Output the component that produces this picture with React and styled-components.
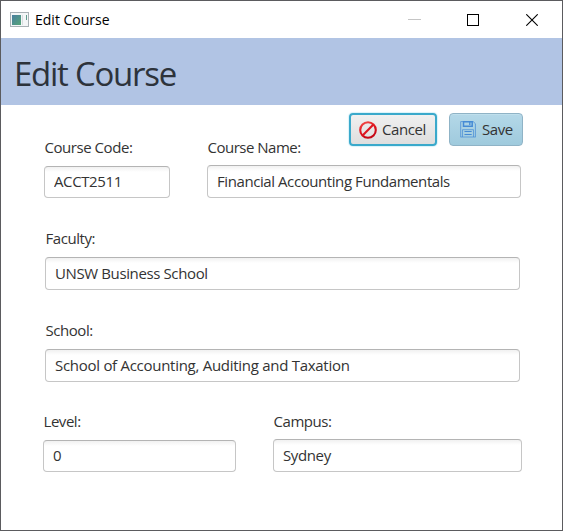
import React from "react";
import styled, { createGlobalStyle } from "styled-components";

const GlobalStyle = createGlobalStyle`
  * { box-sizing: border-box; }
  body { margin: 0; background: #fff; }
`;

const Window = styled.main`
  width: 563px;
  height: 531px;
  display: flex;
  flex-direction: column;
  border: 1px solid #5b5b5e;
  background: #fff;
  color: #333;
  font: 15px/20px "Open Sans", "Noto Sans", sans-serif;
  overflow: hidden;
`;

const TitleBar = styled.header`
  flex: 0 0 37px;
  display: flex;
  align-items: center;
  padding-left: 9px;
  color: #000;
`;

const WindowTitle = styled.span`
  flex: 1;
  margin-left: 5px;
  font-size: 14px;
`;

const WindowControls = styled.div`
  display: flex;
  align-items: center;
  padding-right: 1px;
`;

const Control = styled.span`
  width: ${(p) => p.$width || 59}px;
  display: flex;
  justify-content: center;
`;

const Banner = styled.div`
  flex: 0 0 67px;
  display: flex;
  align-items: center;
  padding: 4px 0 0 13px;
  background: #b1c4e4;
`;

const Heading = styled.h1`
  margin: 0;
  font-size: 33px;
  line-height: 44px;
  font-weight: 400;
  letter-spacing: -1.25px;
  color: #2d333b;
`;

const Actions = styled.div`
  display: flex;
  justify-content: flex-end;
  gap: 12px;
  padding: 8px 39px 0 0;
`;

const ActionButton = styled.button`
  width: ${(p) => p.$width}px;
  height: 33px;
  display: flex;
  align-items: center;
  gap: ${(p) => p.$gap}px;
  padding: 0 0 0 ${(p) => p.$pad}px;
  border-radius: 4px;
  border: ${(p) => (p.$primary ? "1px solid #8fb3c6" : "2px solid #3aa9cb")};
  background: ${(p) =>
    p.$primary
      ? "linear-gradient(#b4d8e8, #9fcadd)"
      : "linear-gradient(#f0f0f0, #dedede)"};
  box-shadow: ${(p) =>
    p.$primary ? "inset 0 1px #bfdfec" : "0 0 1px 1px #d9f3fa"};
  color: #333;
  font: inherit;
  letter-spacing: ${(p) => p.$track}px;
`;

const ButtonText = styled.span`
  padding-bottom: 2px;
`;

const Form = styled.form`
  display: flex;
  flex-direction: column;
`;

const Row = styled.div`
  display: flex;
  align-items: flex-end;
  gap: ${(p) => p.$gap || 0}px;
  margin: ${(p) => p.$top}px 0 0 ${(p) => p.$left}px;
`;

const Field = styled.label`
  width: ${(p) => p.$width}px;
  display: flex;
  flex-direction: column;
  gap: ${(p) => p.$space}px;
`;

const Caption = styled.span`
  height: 20px;
  padding-left: 0.5px;
  line-height: 18px;
  letter-spacing: ${(p) => p.$track}px;
`;

const TextInput = styled.input`
  width: 100%;
  height: ${(p) => p.$height}px;
  padding: 0 8px 2px 9px;
  border: 1px solid #c6c6c6;
  border-top-color: #b4b4b4;
  border-radius: 4px;
  background: linear-gradient(#f1f1f1, #fff 5px);
  outline: none;
  color: #333;
  font: inherit;
  letter-spacing: ${(p) => p.$track}px;
`;

function FormField({ label, value, width, height = 33, space = 8, labelTrack = -0.45, track = -0.38 }) {
  return (
    <Field $width={width} $space={space}>
      <Caption $track={labelTrack}>{label}</Caption>
      <TextInput $height={height} $track={track} defaultValue={value} />
    </Field>
  );
}

function AppIcon() {
  return (
    <svg width="20" height="16" viewBox="0 0 20 16">
      <defs>
        <linearGradient id="pane" x2="1" y2="1">
          <stop stopColor="#4a7fa0" />
          <stop offset="1" stopColor="#55a577" />
        </linearGradient>
      </defs>
      <rect x="0.5" y="0.5" width="18" height="14" fill="#f4f6f7" stroke="#a9b1b5" />
      <rect x="2" y="3" width="9" height="10" fill="url(#pane)" />
      <path d="M12.5 3v10" stroke="#d7dcde" />
      <path d="M16.5 3v5" stroke="#609b8c" />
    </svg>
  );
}

function CancelIcon() {
  return (
    <svg width="18" height="18" viewBox="0 0 18 18" fill="none">
      <defs>
        <linearGradient id="ban" x2="0.4" y2="1">
          <stop stopColor="#f2504c" />
          <stop offset="0.55" stopColor="#e0141e" />
          <stop offset="1" stopColor="#c50916" />
        </linearGradient>
      </defs>
      <circle cx="9" cy="9" r="7.8" stroke="url(#ban)" strokeWidth="2.1" />
      <path d="M3.6 14.4L14.4 3.6" stroke="#dd1620" strokeWidth="2.1" />
    </svg>
  );
}

function SaveIcon() {
  return (
    <svg width="16" height="17" viewBox="0 0 16 17" fill="none" stroke="#468bd5">
      <path d="M0.7 16.2V0.6H13.2L15.4 2.7V16.2" strokeWidth="1" opacity="0.75" />
      <path d="M3.5 0.7V5.2H12.2V0.7Z" strokeWidth="1.5" />
      <path d="M9.8 1v3" strokeWidth="1.3" />
      <path d="M0.7 16H15.4M2.5 16V8.7H13.5V16" strokeWidth="1" opacity="0.7" />
      <path d="M4.5 10.5H11.7M4.5 13.5H11.7" strokeWidth="1" />
    </svg>
  );
}

export default function App() {
  return (
    <>
      <GlobalStyle />
      <Window>
        <TitleBar>
          <AppIcon />
          <WindowTitle>Edit Course</WindowTitle>
          <WindowControls>
            <Control $width={57}>
              <svg width="13" height="12"><path d="M0 5.5H13" stroke="#c5c5c5" /></svg>
            </Control>
            <Control>
              <svg width="12" height="12"><rect x="0.5" y="0.5" width="11" height="11" fill="none" stroke="#000" /></svg>
            </Control>
            <Control>
              <svg width="12" height="12"><path d="M0.3 0.3L11.7 11.7M11.7 0.3L0.3 11.7" stroke="#000" strokeWidth="1.1" /></svg>
            </Control>
          </WindowControls>
        </TitleBar>
        <Banner>
          <Heading>Edit Course</Heading>
        </Banner>
        <Actions>
          <ActionButton type="button" $width={88} $pad={8} $gap={5} $track={-0.4}>
            <CancelIcon />
            <ButtonText>Cancel</ButtonText>
          </ActionButton>
          <ActionButton type="button" $primary $width={74} $pad={10} $gap={6} $track={-0.4}>
            <SaveIcon />
            <ButtonText>Save</ButtonText>
          </ActionButton>
        </Actions>
        <Form>
          <Row $top={-8} $left={43} $gap={37}>
            <FormField label="Course Code:" value="ACCT2511" width={126} height={32} />
            <FormField label="Course Name:" value="Financial Accounting Fundamentals" width={314} height={33} space={7} labelTrack={-0.5} track={-0.42} />
          </Row>
          <Row $top={31} $left={44}>
            <FormField label="Faculty:" value="UNSW Business School" width={475} />
          </Row>
          <Row $top={31} $left={44}>
            <FormField label="School:" value="School of Accounting, Auditing and Taxation" width={475} track={-0.28} />
          </Row>
          <Row $top={30} $left={42} $gap={37}>
            <FormField label="Level:" value="0" width={193} height={32} />
            <FormField label="Campus:" value="Sydney" width={249} height={33} space={7} />
          </Row>
        </Form>
      </Window>
    </>
  );
}
